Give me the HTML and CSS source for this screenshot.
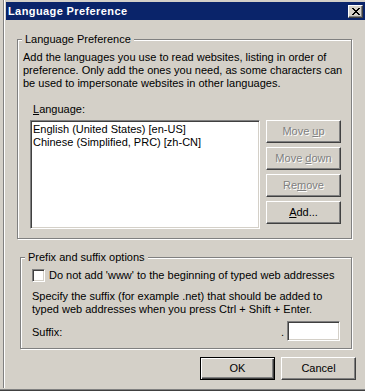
FILE: index.html
```html
<!DOCTYPE html>
<html>
<head>
<meta charset="utf-8">
<link rel="stylesheet" href="styles.css">
</head>
<body>
<div class="frame">
  <div class="window">
    <div class="titlebar">
      <span class="title">Language Preference</span>
      <span class="close">
        <svg width="8" height="7" viewBox="0 0 8 7" shape-rendering="crispEdges"><path d="M0 0h2v1H0zM6 0h2v1H6zM1 1h2v1H1zM5 1h2v1H5zM2 2h4v1H2zM3 3h2v1H3zM2 4h4v1H2zM1 5h2v1H1zM5 5h2v1H5zM0 6h2v1H0zM6 6h2v1H6z" fill="#000"/></svg>
      </span>
    </div>
    <div class="client">
      <div class="group group-lang">
        <span class="legend">Language Preference</span>
        <p class="desc">Add the languages you use to read websites, listing in order of<br>preference. Only add the ones you need, as some characters can<br>be used to impersonate websites in other languages.</p>
        <div class="label"><u>L</u>anguage:</div>
        <div class="lang-row">
          <div class="listbox sunken">
            <div class="item">English (United States) [en-US]</div>
            <div class="item">Chinese (Simplified, PRC) [zh-CN]</div>
          </div>
          <div class="side-buttons">
            <button class="btn disabled">Move <u>u</u>p</button>
            <button class="btn disabled">Move <u>d</u>own</button>
            <button class="btn disabled">Re<u>m</u>ove</button>
            <button class="btn"><u>A</u>dd...</button>
          </div>
        </div>
      </div>
      <div class="group group-prefix">
        <span class="legend">Prefix and suffix options</span>
        <div class="check-row">
          <span class="checkbox sunken"></span>
          <span>Do not add 'www' to the beginning of typed web addresses</span>
        </div>
        <p class="specify">Specify the suffix (for example .net) that should be added to<br>typed web addresses when you press Ctrl + Shift + Enter.</p>
        <div class="suffix-row">
          <span class="suffix-label">Suffix:</span>
          <span class="dot">.</span>
          <span class="input sunken"></span>
        </div>
      </div>
      <div class="footer">
        <button class="btn default">OK</button>
        <button class="btn">Cancel</button>
      </div>
    </div>
  </div>
</div>
</body>
</html>
```
FILE: styles.css
```css
html, body {
  margin: 0;
  padding: 0;
}
body {
  width: 365px;
  height: 391px;
  overflow: hidden;
  background: #D4D0C8;
  font-family: "Liberation Sans", Arial, sans-serif;
  font-size: 11px;
  line-height: 13px;
  color: #000;
}
.frame {
  height: 391px;
  box-sizing: border-box;
  padding-left: 3px;
  border-bottom: 1px solid #404040;
  box-shadow: inset 0 -1px #808080;
}
.window {
  height: 388px;
  box-sizing: border-box;
  border-left: 1px solid #808080;
  box-shadow: inset 1px 0 #fff;
  padding: 2px 0 0 2px;
}
.titlebar {
  height: 18px;
  background: #0A246A;
  color: #fff;
  font-weight: bold;
  letter-spacing: 0.4px;
  display: flex;
  align-items: center;
  justify-content: space-between;
  padding: 0 2px 0 2px;
}
.close {
  width: 15px;
  height: 13px;
  box-sizing: border-box;
  background: #D4D0C8;
  border: 1px solid;
  border-color: #fff #404040 #404040 #fff;
  box-shadow: inset -1px -1px #808080;
  display: flex;
  align-items: center;
  justify-content: center;
}
.close svg { display: block; }
.client {
  padding-left: 11px;
}
.group {
  position: relative;
  box-sizing: border-box;
  border: 1px solid #808080;
  box-shadow: inset 1px 1px #fff, 1px 1px #fff;
}
.legend {
  position: absolute;
  top: -7px;
  left: 4px;
  padding: 0 3px;
  background: #D4D0C8;
  white-space: nowrap;
}
.group-lang {
  margin-top: 19px;
  width: 335px;
  height: 200px;
}
.desc {
  margin: 11px 0 0 5px;
  white-space: nowrap;
}
.label {
  margin-top: 13px;
  padding-left: 15px;
}
.lang-row {
  display: flex;
  gap: 6px;
  margin: 4px 0 0 12px;
}
.sunken {
  box-sizing: border-box;
  border: 1px solid;
  border-color: #808080 #fff #fff #808080;
  box-shadow: inset 1px 1px #404040, inset -1px -1px #D4D0C8;
  background: #fff;
}
.listbox {
  width: 230px;
  height: 109px;
  padding: 2px 2px;
  white-space: nowrap;
}
.side-buttons {
  display: flex;
  flex-direction: column;
  gap: 4px;
}
.btn {
  width: 75px;
  height: 23px;
  box-sizing: border-box;
  padding: 0;
  margin: 0;
  font: inherit;
  color: #000;
  background: #D4D0C8;
  border: 1px solid;
  border-color: #fff #404040 #404040 #fff;
  box-shadow: inset -1px -1px #808080;
  border-radius: 0;
}
.btn.disabled {
  color: #808080;
  text-shadow: 1px 1px #fff;
}
.btn.default {
  border: 1px solid #000;
  box-shadow: inset 1px 1px #fff, inset -1px -1px #404040, inset -2px -2px #808080;
}
.group-prefix {
  margin: 18px 0 0 3px;
  width: 332px;
  height: 92px;
}
.check-row {
  display: flex;
  align-items: center;
  gap: 4px;
  height: 13px;
  margin: 11px 0 0 11px;
  white-space: nowrap;
}
.checkbox {
  width: 13px;
  height: 13px;
  flex: none;
}
.specify {
  margin: 8px 0 0 11px;
  white-space: nowrap;
}
.suffix-row {
  display: flex;
  height: 20px;
  margin: 5px 11px 0 11px;
}
.suffix-label {
  margin-top: 5px;
}
.dot {
  margin: 5px 3px 0 auto;
}
.input {
  width: 53px;
  height: 20px;
}
.footer {
  display: flex;
  gap: 6px;
  margin-top: 8px;
  padding-left: 183px;
}
```
